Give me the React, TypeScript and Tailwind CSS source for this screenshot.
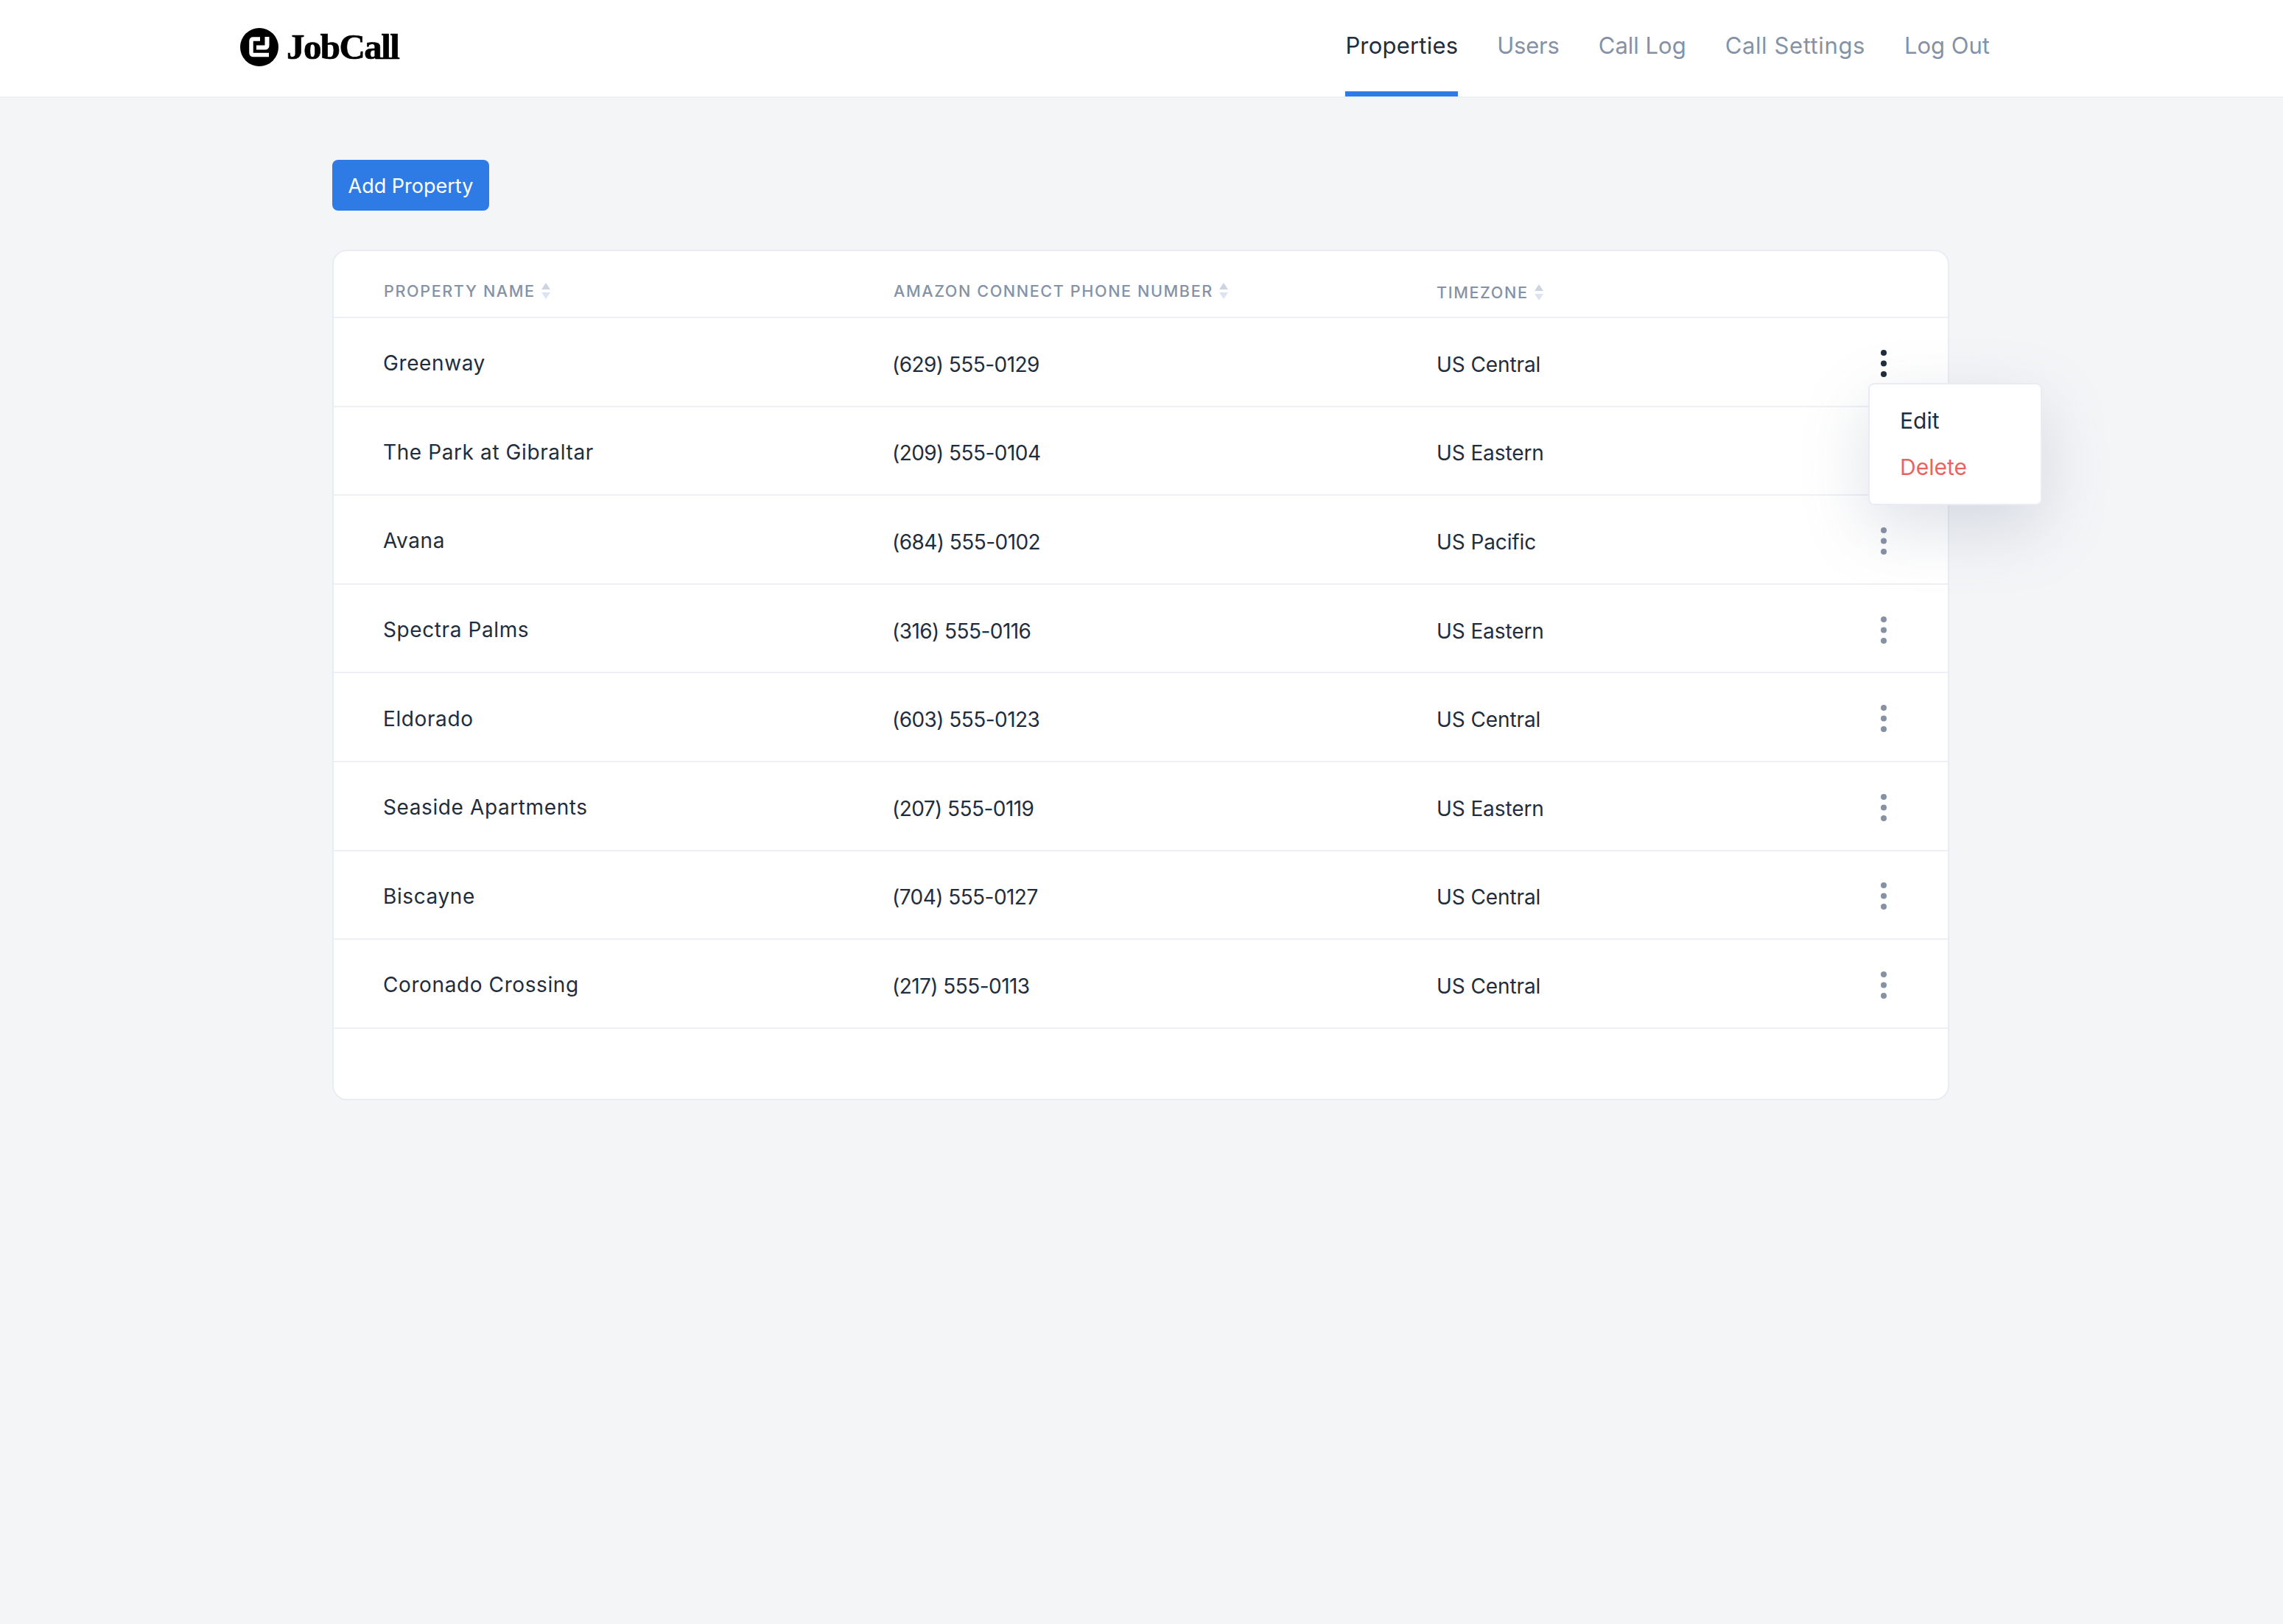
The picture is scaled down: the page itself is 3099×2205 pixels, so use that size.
const rows = [
  { name: "Greenway", phone: "(629) 555-0129", zone: "US Central" },
  { name: "The Park at Gibraltar", phone: "(209) 555-0104", zone: "US Eastern" },
  { name: "Avana", phone: "(684) 555-0102", zone: "US Pacific" },
  { name: "Spectra Palms", phone: "(316) 555-0116", zone: "US Eastern" },
  { name: "Eldorado", phone: "(603) 555-0123", zone: "US Central" },
  { name: "Seaside Apartments", phone: "(207) 555-0119", zone: "US Eastern" },
  { name: "Biscayne", phone: "(704) 555-0127", zone: "US Central" },
  { name: "Coronado Crossing", phone: "(217) 555-0113", zone: "US Central" },
];

const navItems = [
  { label: "Users", cls: "tracking-[-0.2px]" },
  { label: "Call Log", cls: "" },
  { label: "Call Settings", cls: "tracking-[0.6px]" },
  { label: "Log Out", cls: "" },
];

function Logo() {
  return (
    <svg viewBox="0 0 52 52" className="h-[52px] w-[52px]">
      <circle cx="26" cy="26" r="26" fill="#000" />
      <g fill="none" stroke="#fff" strokeWidth="5.5">
        <path d="M27 15H18Q15 15 15 18V33.5Q15 36.5 18 36.5H39" />
        <path d="M22 26.5H33.5Q36.5 26.5 36.5 23.5V12" strokeWidth="6" />
      </g>
    </svg>
  );
}

function SortIcon() {
  return (
    <svg viewBox="0 0 14 22" className="ml-[7px] h-[22px] w-[14px]">
      <path d="M7 0l6 9H1z" fill="#cbd5e1" />
      <path d="M7 22l-6-9h12z" fill="#dbe4f0" />
    </svg>
  );
}

function Dots({ active }: { active: boolean }) {
  return (
    <svg viewBox="0 0 8 37" className="h-[37px] w-[8px]" fill={active ? "#1f2d3d" : "#8592a6"}>
      <circle cx="4" cy="4" r="4" />
      <circle cx="4" cy="18.5" r="4" />
      <circle cx="4" cy="33" r="4" />
    </svg>
  );
}

export default function App() {
  return (
    <div className="min-h-screen bg-[#f4f5f7] font-['Inter',sans-serif]">
      <header className="flex h-[133px] items-stretch justify-between border-b-2 border-[#eef0f5] bg-white pl-[326px] pr-[398px]">
        <div className="flex items-center gap-[11px] pb-[3px]">
          <Logo />
          <span className="font-['Liberation_Serif',serif] text-[49px] font-bold tracking-[-1.6px] text-black [-webkit-text-stroke:0.7px_black]">JobCall</span>
        </div>
        <nav className="flex items-stretch gap-[53px] text-[31px]">
          <a className="flex items-center border-b-[7px] border-[#2f7be5] tracking-[0.2px] text-[#1f2d3d]">Properties</a>
          {navItems.map((item) => (
            <a key={item.label} className={`flex items-center pb-[7px] text-[#8592a6] ${item.cls}`}>{item.label}</a>
          ))}
        </nav>
      </header>

      <main className="pl-[451px] pr-[453px] pt-[84px]">
        <button className="h-[69px] w-[213px] rounded-[8px] bg-[#2f7be5] pt-[4px] text-[27px] text-white">Add Property</button>

        <div className="relative mt-[53px] h-[1155px] rounded-[20px] border-2 border-[#e8edf5] bg-white">
          <div className="grid h-[91px] grid-cols-[692px_737px_1fr] items-center border-b-2 border-[#eef0f5] pl-[68px] pt-[20px] text-[21.6px] font-medium tracking-[1.6px] text-[#8592a6]">
            <div className="flex items-center">PROPERTY NAME<SortIcon /></div>
            <div className="flex items-center">AMAZON CONNECT PHONE NUMBER<SortIcon /></div>
            <div className="flex items-center pt-[3px]">TIMEZONE<SortIcon /></div>
          </div>
          {rows.map((row, i) => (
            <div
              key={row.name}
              className="grid h-[120.6px] grid-cols-[691px_739px_1fr_8px] items-center border-b-2 border-[#eef0f5] pl-[67px] pr-[83px] pt-[4px] text-[#1f2d3d]"
            >
              <div className="text-[28px] tracking-[0.6px]">{row.name}</div>
              <div className="pt-[3px] text-[28px] tracking-[-0.55px]">{row.phone}</div>
              <div className="pt-[3px] text-[28px] tracking-[-0.1px]">{row.zone}</div>
              <Dots active={i === 0} />
            </div>
          ))}

          <div className="absolute left-[2083px] top-[179px] flex h-[166px] w-[236px] flex-col gap-[21px] rounded-[8px] border-2 border-[#e8edf5] bg-white pl-[41px] pt-[28px] text-[30px] shadow-[0_30px_90px_rgba(100,116,139,0.22)]">
            <span className="leading-[42px] text-[#1f2d3d]">Edit</span>
            <span className="leading-[42px] text-[#e8645f]">Delete</span>
          </div>
        </div>
      </main>
    </div>
  );
}
